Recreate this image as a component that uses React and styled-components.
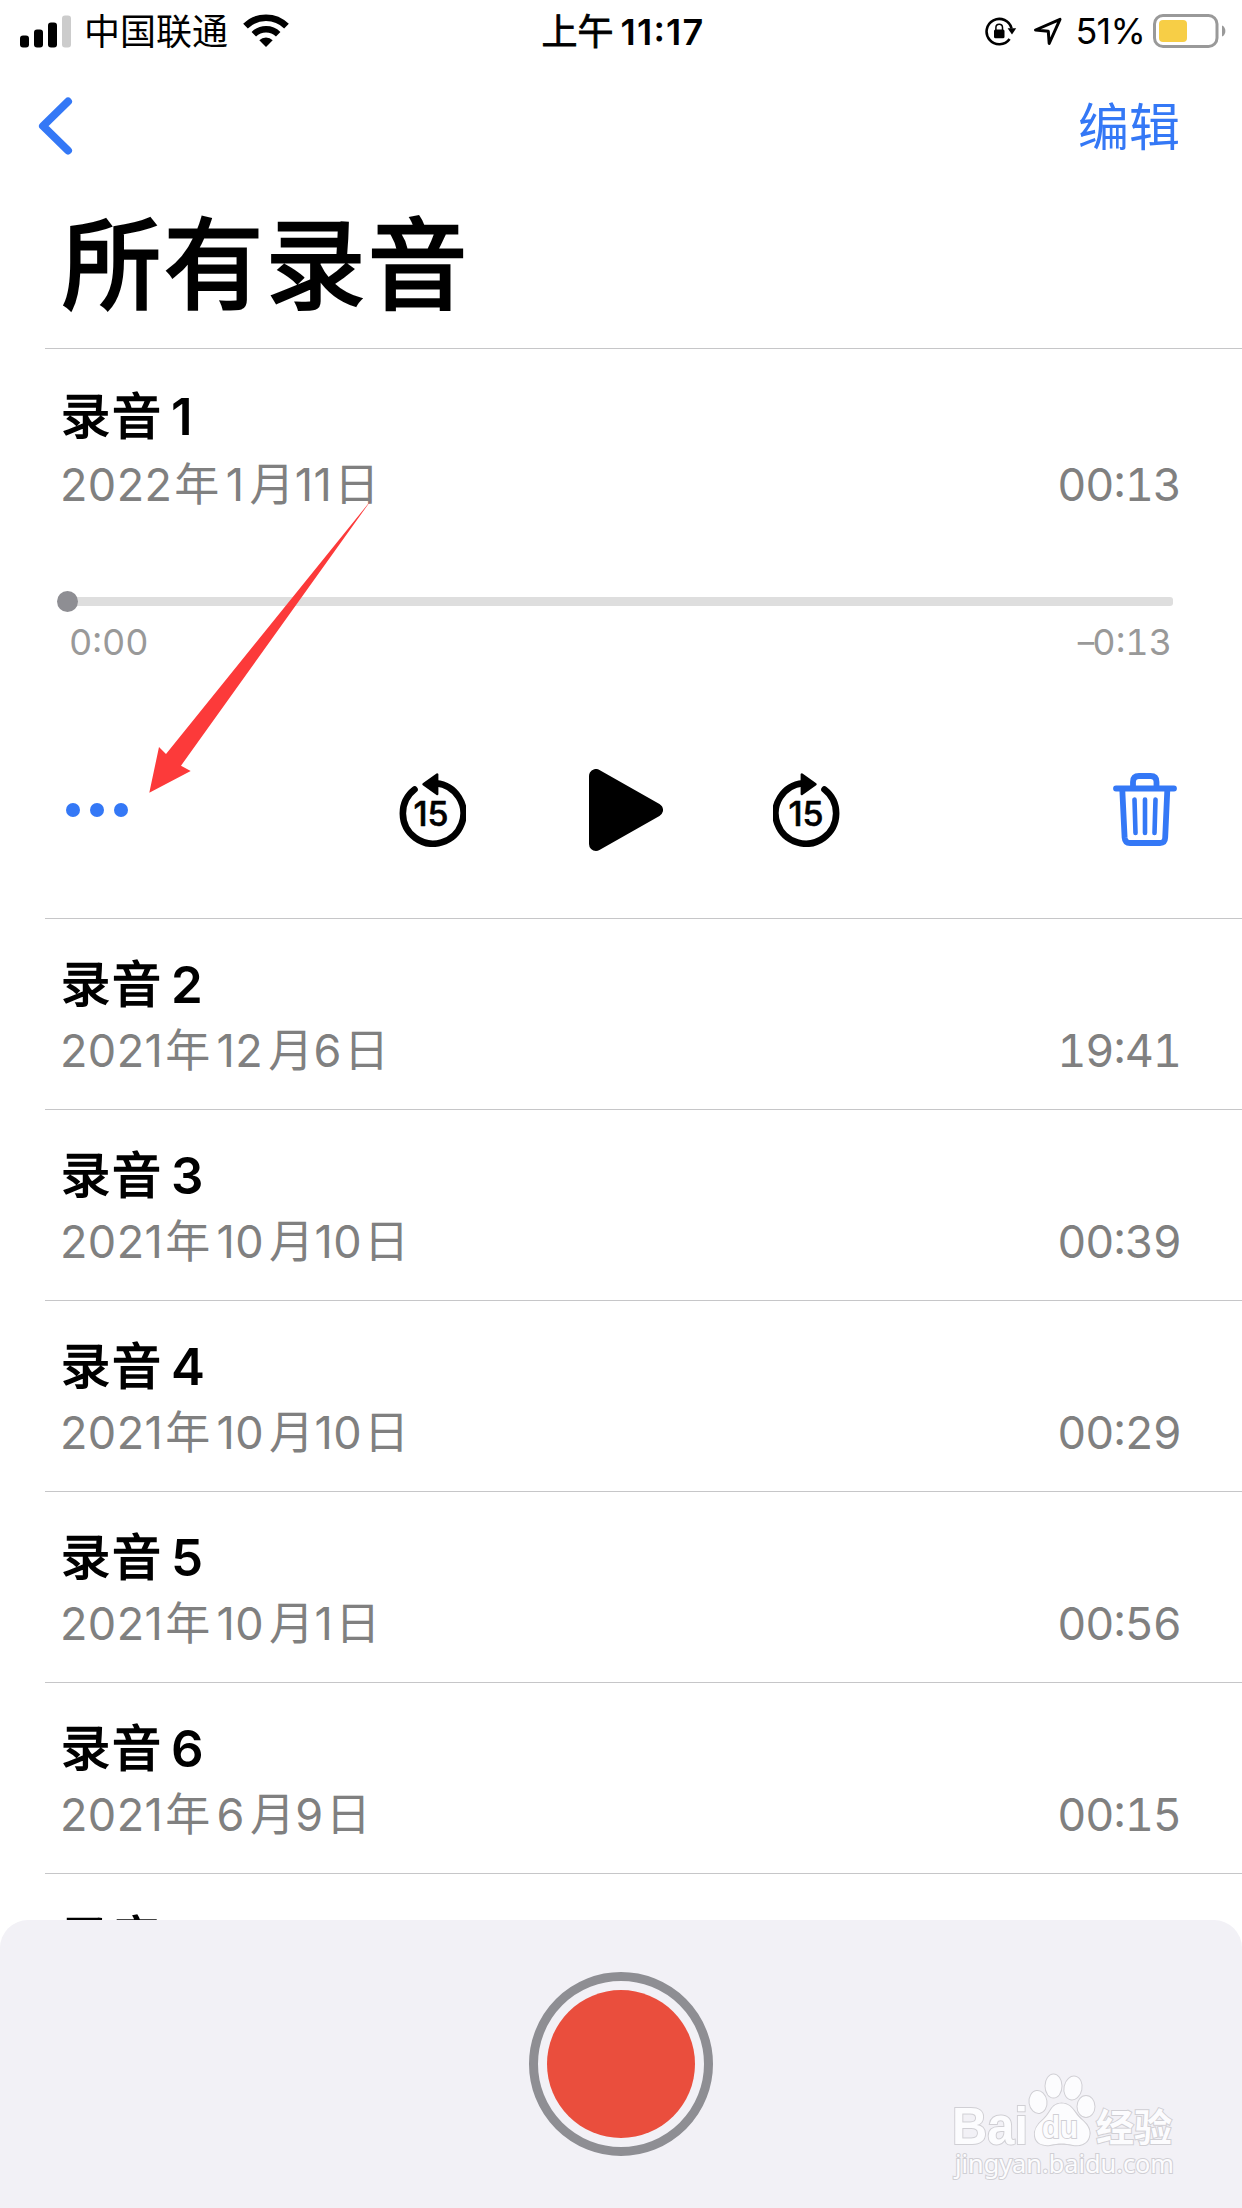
import React from "react";
import styled, {createGlobalStyle} from "styled-components";

const recordings = [
    {number: 2, date: [2021, 12, 6], duration: "19:41"},
    {number: 3, date: [2021, 10, 10], duration: "00:39"},
    {number: 4, date: [2021, 10, 10], duration: "00:29"},
    {number: 5, date: [2021, 10, 1], duration: "00:56"},
    {number: 6, date: [2021, 6, 9], duration: "00:15"}
];

const GlobalStyle = createGlobalStyle`
  * {
    box-sizing: border-box;
  }
  body {
    margin: 0;
    background: #fff;
    font-family: Inter, "Noto Sans CJK SC", sans-serif;
  }
  button {
    display: flex;
    padding: 0;
    border: 0;
    background: none;
    font: inherit;
    color: inherit;
  }
  svg {
    display: block;
    flex: none;
  }
`;
const Screen = styled.div`
  position: relative;
  display: flex;
  flex-direction: column;
  width: 1242px;
  height: 2208px;
  overflow: hidden;
  background: #fff;
  color: #000;
`;
const StatusBar = styled.header`
  display: grid;
  grid-template-columns: 1fr auto 1fr;
  align-items: center;
  height: 60px;
  padding: 0 16px 0 20px;
  font-size: 36px;
  line-height: 60px;
`;
const StatusGroup = styled.div`
  display: flex;
  align-items: center;
  justify-content: ${(props) => props.$end ? "flex-end" : "flex-start"};
`;
const Carrier = styled.span`
  margin: 2px 15px 0 12px;
`;
const Clock = styled.span`
  margin-top: 2px;
  font-weight: 600;
  letter-spacing: 1.2px;
  font-feature-settings: "case";
  & span {
    margin-right: 7px;
    font-weight: 400;
    letter-spacing: 0;
    -webkit-text-stroke: 0.8px #000;
  }
`;
const StatusIcons = styled.span`
  display: flex;
  gap: 16px;
  margin-right: 13px;
`;
const BatteryLevel = styled.span`
  margin: 0 8px 0 0;
  letter-spacing: -0.8px;
`;
const NavBar = styled.nav`
  display: flex;
  justify-content: space-between;
  align-items: center;
  height: 132px;
  padding: 0 62px 0 37px;
  color: #3478f6;
  font-size: 51px;
`;
const EditLabel = styled.span`
  margin-bottom: 4px;
`;
const Title = styled.h1`
  height: 156px;
  margin: 0;
  padding-left: 62px;
  font-size: 99px;
  font-weight: 400;
  letter-spacing: 3px;
  line-height: 146px;
  -webkit-text-stroke: 3px #000;
`;
const List = styled.main`
  flex: 1;
  min-height: 0;
  margin-left: 45px;
  overflow: hidden;
`;
const Row = styled.section`
  height: ${(props) => props.$expanded ? 570 : 191}px;
  padding: ${(props) => props.$expanded ? 35 : 33}px 62px 0 15px;
  border-top: 1px solid #c6c6c8;
`;
const RowName = styled.h2`
  display: flex;
  gap: 8px;
  margin: 0;
  padding-left: 1px;
  font-size: 49px;
  font-weight: 400;
  letter-spacing: 2px;
  line-height: 66px;
  -webkit-text-stroke: 1.6px #000;
`;
const RowNumber = styled.span`
  font-size: 51px;
  font-weight: 600;
  -webkit-text-stroke: 0;
`;
const RowInfo = styled.div`
  display: flex;
  justify-content: space-between;
  margin-top: ${(props) => props.$expanded ? 2 : 0}px;
  color: #808080;
  font-size: 45px;
  line-height: 66px;
`;
const RowDate = styled.span`
  letter-spacing: 0.4px;
`;
const DateUnit = styled.span`
  margin: ${(props) => props.$margin};
`;
const Duration = styled.span`
  margin-right: -1px;
  font-variant-numeric: tabular-nums;
  font-feature-settings: "case";
  letter-spacing: -1px;
`;
const Track = styled.div`
  display: flex;
  align-items: center;
  height: 9px;
  margin: 79px 7px 0 0;
  border-radius: 3px;
  background: #dedede;
`;
const Thumb = styled.div`
  width: 21px;
  height: 21px;
  margin-left: -3px;
  border-radius: 50%;
  background: #8e8e93;
`;
const TrackTimes = styled.div`
  display: flex;
  justify-content: space-between;
  height: 44px;
  margin: 14px 8px 0 9px;
  color: #999;
  font-size: 36px;
  font-variant-numeric: tabular-nums;
  font-feature-settings: "case";
  line-height: 44px;
`;
const MinusSign = styled.span`
  margin-right: -2px;
  font-size: 33px;
`;
const Controls = styled.div`
  display: flex;
  align-items: center;
  height: 82px;
  margin-top: 105px;
`;
const Playback = styled.div`
  display: flex;
  align-items: center;
  margin: 0 auto 0 270px;
`;
const SkipButton = styled.button`
  && {
    padding-bottom: 2px;
  }
`;
const PlayButton = styled.button`
  && {
    margin: 0 110px 0 123px;
  }
`;
const TrashButton = styled.button`
  && {
    margin-right: 3px;
  }
`;
const Footer = styled.footer`
  display: flex;
  justify-content: center;
  height: 288px;
  padding-top: 52px;
  border-radius: 28px 28px 0 0;
  background: #f2f1f6;
`;
const RecordButton = styled.button`
  && {
    width: 184px;
    height: 184px;
    padding: 9px;
    border: 9px solid #8e8e93;
    border-radius: 50%;
  }
  &::before {
    content: "";
    flex: 1;
    border-radius: 50%;
    background: #ea4e3d;
  }
`;
const Pointer = styled.svg`
  position: absolute;
  left: 149px;
  top: 499px;
`;
const Watermark = styled.svg`
  position: absolute;
  left: 940px;
  top: 2060px;
`;

const SkipIcon = ({forward}) => (
    <svg width="68" height="76" viewBox="0 0 68 76">
        <g transform={forward ? "translate(68 0) scale(-1 1)" : undefined}>
            <path d="M16.5 18.5A30.3 30.3 0 1 0 38 12.2" fill="none" stroke="#000" strokeWidth="6.6" strokeLinecap="round"/>
            <path d="M25.5 13.2L39.2 3.4V23Z" stroke="#000" strokeWidth="2.4" strokeLinejoin="round"/>
        </g>
        <text x="33" y="54.5" textAnchor="middle" fontFamily="Inter" fontSize="34" fontWeight="500"
              stroke="#000" strokeWidth="0.6" strokeLinejoin="round">15</text>
    </svg>
);
const SignalIcon = () => (
    <svg width="52" height="33" viewBox="0 0 52 33">
        <rect x="0" y="20.5" width="9" height="12" rx="3"/>
        <rect x="14" y="14.5" width="9" height="18" rx="3"/>
        <rect x="28" y="7.5" width="9" height="25" rx="3"/>
        <rect x="42" y="0.5" width="9" height="32" rx="3" fill="#ccc"/>
    </svg>
);
const WifiIcon = () => (
    <svg width="46" height="34" viewBox="0 0 46 34">
        <path d="M2.5 12.2a29 29 0 0 1 41 0" fill="none" stroke="#000" strokeWidth="6.6"/>
        <path d="M10.8 20.2a17.5 17.5 0 0 1 24.4 0" fill="none" stroke="#000" strokeWidth="6.4"/>
        <path d="M23 33l-6.7-6.7a9.6 9.6 0 0 1 13.4 0z"/>
    </svg>
);
const RotationLockIcon = () => (
    <svg width="32" height="30" viewBox="0 0 32 30">
        <path d="M24.6 23A12.7 12.7 0 1 1 26.6 12.5" fill="none" stroke="#000" strokeWidth="2.6"/>
        <path d="M22.6 12.2h8.6L27 18.6z"/>
        <rect x="9" y="13.5" width="10.5" height="8.8" rx="1.5"/>
        <path d="M10.9 14.5v-3a3.3 3.3 0 0 1 6.6 0v3" fill="none" stroke="#000" strokeWidth="1.5"/>
    </svg>
);
const LocationIcon = () => (
    <svg width="30" height="30" viewBox="0 0 30 30">
        <path d="M2.5 14L27 3.3L16.2 27.5L15.3 15.3Z" fill="none" stroke="#000" strokeWidth="3" strokeLinejoin="round"/>
    </svg>
);
const BatteryIcon = () => (
    <svg width="73" height="34" viewBox="0 0 73 34">
        <rect x="1.5" y="1.5" width="62.5" height="31" rx="8.5" fill="none" stroke="#999" strokeWidth="3"/>
        <rect x="6" y="6" width="28" height="22" rx="4" fill="#f7ce46"/>
        <path d="M69 11.5c4.5 1.5 4.5 9.5 0 11z" fill="#999"/>
    </svg>
);
const TrashIcon = () => (
    <svg width="64" height="74" viewBox="0 0 64 74" fill="none" stroke="#3478f6" strokeLinecap="round" strokeLinejoin="round">
        <path d="M3 15.5H61M20 14V9Q20 3 26 3H37.5Q43.5 3 43.5 9V14" strokeWidth="5.8"/>
        <path d="M9.3 17L11.6 64.5Q12 70 17 70H47Q52 70 52.2 64.5L54.3 17" strokeWidth="5.8"/>
        <path d="M21.5 26.5L22.5 60M32 26.5V60M42.5 26.5L41.5 60" strokeWidth="4.6"/>
    </svg>
);

const RecordingInfo = ({item, expanded}) => {
    const [year, month, day] = item.date;
    return (
        <>
            <RowName>录音<RowNumber>{item.number}</RowNumber></RowName>
            <RowInfo $expanded={expanded}>
                <RowDate>
                    {year}
                    <DateUnit $margin="0 6px 0 2px">年</DateUnit>
                    {month}
                    <DateUnit $margin="0 0 0 5px">月</DateUnit>
                    {day}
                    <DateUnit $margin="0 0 0 2px">日</DateUnit>
                </RowDate>
                <Duration>{item.duration}</Duration>
            </RowInfo>
        </>
    );
};

const Player = () => (
    <>
        <Track><Thumb/></Track>
        <TrackTimes>
            <span>0:00</span>
            <span><MinusSign>–</MinusSign>0:13</span>
        </TrackTimes>
        <Controls>
            <button>
                <svg width="68" height="14" viewBox="0 0 68 14" fill="#3478f6">
                    <circle cx="13" cy="7" r="7"/>
                    <circle cx="37" cy="7" r="7"/>
                    <circle cx="61" cy="7" r="7"/>
                </svg>
            </button>
            <Playback>
                <SkipButton><SkipIcon/></SkipButton>
                <PlayButton>
                    <svg width="74" height="82" viewBox="0 0 74 82">
                        <path d="M7 7V75L67 41Z" stroke="#000" strokeWidth="14" strokeLinejoin="round"/>
                    </svg>
                </PlayButton>
                <SkipButton><SkipIcon forward/></SkipButton>
            </Playback>
            <TrashButton><TrashIcon/></TrashButton>
        </Controls>
    </>
);

const App = () => (
    <Screen>
        <GlobalStyle/>
        <StatusBar>
            <StatusGroup>
                <SignalIcon/>
                <Carrier>中国联通</Carrier>
                <WifiIcon/>
            </StatusGroup>
            <Clock><span>上午</span>11:17</Clock>
            <StatusGroup $end>
                <StatusIcons>
                    <RotationLockIcon/>
                    <LocationIcon/>
                </StatusIcons>
                <BatteryLevel>51%</BatteryLevel>
                <BatteryIcon/>
            </StatusGroup>
        </StatusBar>
        <NavBar>
            <button>
                <svg width="36" height="58" viewBox="0 0 36 58">
                    <path d="M31 4.5L6 29L31 53.5" fill="none" stroke="#3478f6" strokeWidth="8" strokeLinecap="round" strokeLinejoin="round"/>
                </svg>
            </button>
            <button><EditLabel>编辑</EditLabel></button>
        </NavBar>
        <Title>所有录音</Title>
        <List>
            <Row $expanded>
                <RecordingInfo item={{number: 1, date: [2022, 1, 11], duration: "00:13"}} expanded/>
                <Player/>
            </Row>
            {recordings.map((item) => (
                <Row key={item.number}>
                    <RecordingInfo item={item}/>
                </Row>
            ))}
            <Row>
                <RowName>录音</RowName>
            </Row>
        </List>
        <Footer>
            <RecordButton/>
        </Footer>
        <Pointer width="225" height="295" viewBox="0 0 225 295" fill="#fc3a3a">
            <path d="M0.3 293.7L10 248L17 255L223 0L32 266.7L41.7 272Z"/>
        </Pointer>
        <Watermark width="260" height="130" viewBox="0 0 260 130" fill="#fcfcfe" stroke="#d0cfd4" strokeWidth="2" paintOrder="stroke">
            <text x="12" y="84" fontFamily="Liberation Sans" fontSize="51" fontWeight="700" textLength="76" lengthAdjust="spacingAndGlyphs">Bai</text>
            <ellipse cx="98" cy="42" rx="8.5" ry="11" transform="rotate(-8 98 42)"/>
            <ellipse cx="113.5" cy="26" rx="8" ry="11.5"/>
            <ellipse cx="133" cy="28" rx="8.5" ry="11.5" transform="rotate(12 133 28)"/>
            <ellipse cx="146" cy="46.5" rx="8.5" ry="10.5"/>
            <path d="M121.5 43.5C133 43.5 134 54 142 60C148 65 151 71 149 77C147 84 140 86 133 85C124 83 119 83 110 85C102 86 96 83 95 76C94 69 98 64 104 59C111 53 111 43.5 121.5 43.5Z"/>
            <text x="102" y="78" fontFamily="Liberation Sans" fontSize="32" fontWeight="700" textLength="36" lengthAdjust="spacingAndGlyphs">du</text>
            <text x="156" y="81" fontFamily="Noto Sans CJK SC" fontSize="38" fontWeight="700">经验</text>
            <text x="15" y="113" fontFamily="Noto Sans" fontSize="25" textLength="219" lengthAdjust="spacingAndGlyphs">jingyan.baidu.com</text>
        </Watermark>
    </Screen>
);

export default App;
